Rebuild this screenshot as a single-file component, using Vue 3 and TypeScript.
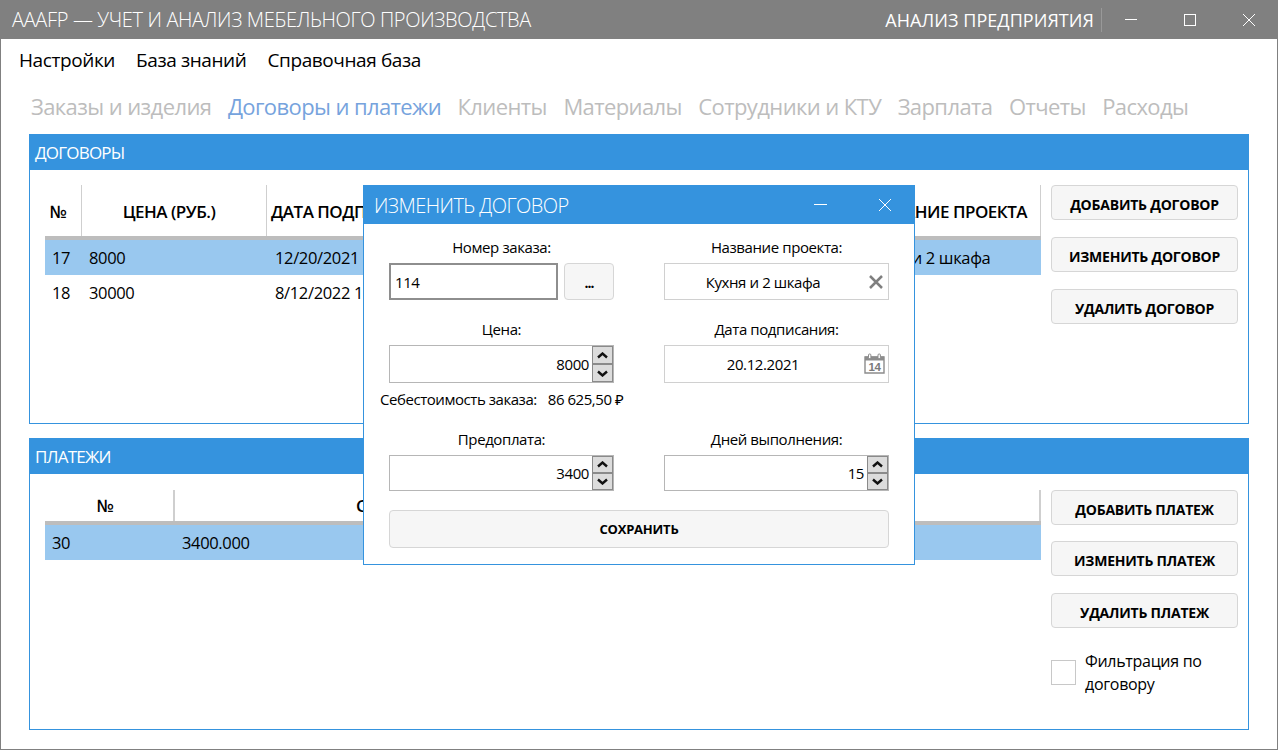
<template>
  <div class="window">
    <header class="titlebar">
      <span class="app-title">АААFP — УЧЕТ И АНАЛИЗ МЕБЕЛЬНОГО ПРОИЗВОДСТВА</span>
      <span class="app-section">АНАЛИЗ ПРЕДПРИЯТИЯ</span>
      <div class="win-controls">
        <button class="win-btn">
          <svg width="12" height="12" viewBox="0 0 12 12"><path d="M0 5.5H12" stroke="#fff" /></svg>
        </button>
        <button class="win-btn">
          <svg width="12" height="12" viewBox="0 0 12 12"><rect x="0.5" y="0.5" width="11" height="11" fill="none" stroke="#fff" /></svg>
        </button>
        <button class="win-btn">
          <svg width="12" height="12" viewBox="0 0 12 12"><path d="M0 0L12 12M12 0L0 12" stroke="#fff" /></svg>
        </button>
      </div>
    </header>

    <nav class="menu">
      <span v-for="m in menu" :key="m">{{ m }}</span>
    </nav>

    <nav class="tabs">
      <span v-for="t in tabs" :key="t" :class="{ active: t === activeTab }">{{ t }}</span>
    </nav>

    <main class="content">
      <section class="group group-contracts">
        <h2 class="group-title">ДОГОВОРЫ</h2>
        <div class="group-body">
          <div class="grid contracts">
            <div class="grid-head">
              <div class="th th-num">№</div>
              <div class="th th-price">ЦЕНА (РУБ.)</div>
              <div class="th th-left">ДАТА ПОДПИСАНИЯ</div>
              <div class="th th-right">НАЗВАНИЕ ПРОЕКТА</div>
            </div>
            <div v-for="r in contracts" :key="r.id" class="grid-row" :class="{ selected: r.selected }">
              <div class="td">{{ r.id }}</div>
              <div class="td">{{ r.price }}</div>
              <div class="td td-date">{{ r.date }}</div>
              <div class="td">{{ r.project }}</div>
            </div>
          </div>
          <div class="actions">
            <button v-for="b in contractActions" :key="b" class="btn">{{ b }}</button>
          </div>
        </div>
      </section>

      <section class="group group-payments">
        <h2 class="group-title">ПЛАТЕЖИ</h2>
        <div class="group-body">
          <div class="grid payments">
            <div class="grid-head">
              <div class="th th-id">№</div>
              <div class="th th-sum">СУММА</div>
            </div>
            <div class="grid-row selected">
              <div class="td">30</div>
              <div class="td td-sum">3400.000</div>
            </div>
          </div>
          <div class="actions">
            <button v-for="b in paymentActions" :key="b" class="btn">{{ b }}</button>
            <label class="filter">
              <span class="checkbox"></span>
              <span class="filter-text">Фильтрация по договору</span>
            </label>
          </div>
        </div>
      </section>
    </main>

    <div class="dialog">
      <header class="dialog-head">
        <span class="dialog-title">ИЗМЕНИТЬ ДОГОВОР</span>
        <div class="dialog-controls">
          <svg width="14" height="14" viewBox="0 0 14 14"><path d="M0 6.5H13" stroke="#fff" /></svg>
          <svg width="14" height="14" viewBox="0 0 14 14"><path d="M1 1L13 13M13 1L1 13" stroke="#fff" /></svg>
        </div>
      </header>
      <div class="dialog-body">
        <div class="field-row">
          <div class="field">
            <label>Номер заказа:</label>
            <div class="order-line">
              <div class="input input-strong">114</div>
              <button class="btn btn-dots">...</button>
            </div>
          </div>
          <div class="field">
            <label>Название проекта:</label>
            <div class="input input-light input-center input-text">
              Кухня и 2 шкафа
              <svg class="clear-icon" width="14" height="14" viewBox="0 0 14 14"><path d="M1 1L13 13M13 1L1 13" stroke="#7f7f7f" stroke-width="2.5" /></svg>
            </div>
          </div>
        </div>

        <div class="field-row row-price">
          <div class="field">
            <label>Цена:</label>
            <div class="input input-mid input-num">
              <span class="num-value">8000</span>
              <span class="spin">
                <span class="spin-btn"><svg width="11" height="7" viewBox="0 0 11 7"><path d="M1 5.5L5.5 1.5L10 5.5" fill="none" stroke="#111" stroke-width="2.4" /></svg></span>
                <span class="spin-btn"><svg width="11" height="7" viewBox="0 0 11 7"><path d="M1 1.5L5.5 5.5L10 1.5" fill="none" stroke="#111" stroke-width="2.4" /></svg></span>
              </span>
            </div>
          </div>
          <div class="field">
            <label>Дата подписания:</label>
            <div class="input input-light input-center input-date">
              20.12.2021
              <svg class="cal-icon" width="21" height="21" viewBox="0 0 21 21">
                <path d="M1 4H20V20H1Z" fill="#fff" stroke="#8c8c8c" stroke-width="1.4" />
                <path d="M1 3.5H20V7.5H1Z" fill="#8c8c8c" />
                <rect x="4.5" y="1" width="2.4" height="4.6" rx="1" fill="#fff" stroke="#8c8c8c" />
                <rect x="14" y="1" width="2.4" height="4.6" rx="1" fill="#fff" stroke="#8c8c8c" />
                <text x="10.5" y="18" text-anchor="middle" font-size="11.5" font-weight="600" fill="#7a7a7a">14</text>
              </svg>
            </div>
          </div>
        </div>

        <div class="cost-line">
          <span>Себестоимость заказа:</span>
          <span>86 625,50 ₽</span>
        </div>

        <div class="field-row row-prepay">
          <div class="field">
            <label>Предоплата:</label>
            <div class="input input-mid input-num">
              <span class="num-value">3400</span>
              <span class="spin">
                <span class="spin-btn"><svg width="11" height="7" viewBox="0 0 11 7"><path d="M1 5.5L5.5 1.5L10 5.5" fill="none" stroke="#111" stroke-width="2.4" /></svg></span>
                <span class="spin-btn"><svg width="11" height="7" viewBox="0 0 11 7"><path d="M1 1.5L5.5 5.5L10 1.5" fill="none" stroke="#111" stroke-width="2.4" /></svg></span>
              </span>
            </div>
          </div>
          <div class="field">
            <label>Дней выполнения:</label>
            <div class="input input-mid input-num">
              <span class="num-value">15</span>
              <span class="spin">
                <span class="spin-btn"><svg width="11" height="7" viewBox="0 0 11 7"><path d="M1 5.5L5.5 1.5L10 5.5" fill="none" stroke="#111" stroke-width="2.4" /></svg></span>
                <span class="spin-btn"><svg width="11" height="7" viewBox="0 0 11 7"><path d="M1 1.5L5.5 5.5L10 1.5" fill="none" stroke="#111" stroke-width="2.4" /></svg></span>
              </span>
            </div>
          </div>
        </div>

        <button class="btn btn-save">СОХРАНИТЬ</button>
      </div>
    </div>
  </div>
</template>

<script setup lang="ts">
interface Contract {
  id: number
  price: string
  date: string
  project: string
  selected?: boolean
}

const menu: string[] = ['Настройки', 'База знаний', 'Справочная база']
const tabs: string[] = ['Заказы и изделия', 'Договоры и платежи', 'Клиенты', 'Материалы', 'Сотрудники и КТУ', 'Зарплата', 'Отчеты', 'Расходы']
const activeTab = 'Договоры и платежи'

const contracts: Contract[] = [
  { id: 17, price: '8000', date: '12/20/2021 12:00:00 AM', project: 'Кухня и 2 шкафа', selected: true },
  { id: 18, price: '30000', date: '8/12/2022 12:00:00 AM', project: '' }
]

const contractActions: string[] = ['ДОБАВИТЬ ДОГОВОР', 'ИЗМЕНИТЬ ДОГОВОР', 'УДАЛИТЬ ДОГОВОР']
const paymentActions: string[] = ['ДОБАВИТЬ ПЛАТЕЖ', 'ИЗМЕНИТЬ ПЛАТЕЖ', 'УДАЛИТЬ ПЛАТЕЖ']
</script>

<style scoped>
.window {
  position: relative;
  width: 1278px;
  height: 750px;
  box-sizing: border-box;
  border: 1px solid #808080;
  border-top: none;
  background: #fff;
  overflow: hidden;
  font-family: "Open Sans", "Noto Sans", sans-serif;
  color: #000;
  display: flex;
  flex-direction: column;
}

.titlebar {
  height: 39px;
  margin: 0 -1px;
  padding-left: 12px;
  background: #808080;
  color: #fff;
  display: flex;
  align-items: center;
  flex-shrink: 0;
}

.app-title {
  font-size: 20px;
  font-weight: 300;
  letter-spacing: -0.35px;
  white-space: nowrap;
}

.app-section {
  margin-left: auto;
  font-size: 18px;
  letter-spacing: 0.05px;
  padding-right: 7px;
  border-right: 1px solid #999;
  line-height: 24px;
  white-space: nowrap;
}

.win-controls {
  display: flex;
  width: 176px;
  flex-shrink: 0;
}

.win-btn {
  flex: 1;
  height: 39px;
  padding: 0;
  border: none;
  background: none;
  display: flex;
  align-items: center;
  justify-content: center;
}

.menu {
  height: 42px;
  padding-left: 18px;
  display: flex;
  align-items: center;
  gap: 21px;
  font-size: 19px;
  letter-spacing: -0.4px;
  flex-shrink: 0;
}

.tabs {
  height: 49px;
  margin-bottom: 4px;
  padding-left: 30px;
  display: flex;
  align-items: center;
  gap: 16.5px;
  font-size: 22px;
  letter-spacing: -0.6px;
  color: #bdbdbd;
  white-space: nowrap;
  flex-shrink: 0;
}

.tabs .active {
  color: #76a3dd;
}

.content {
  padding: 0 28px;
  display: flex;
  flex-direction: column;
  gap: 14px;
}

.group {
  border: 1px solid #3593de;
  box-sizing: border-box;
  display: flex;
  flex-direction: column;
}

.group-contracts {
  height: 290px;
}

.group-payments {
  height: 292px;
}

.group-title {
  margin: 0;
  height: 35px;
  padding-left: 5px;
  background: #3593de;
  color: #fff;
  font-size: 17px;
  font-weight: 400;
  letter-spacing: -0.8px;
  line-height: 36px;
  flex-shrink: 0;
}

.group-body {
  display: flex;
  padding: 15px 10px 0 15px;
  gap: 10px;
}

.group-payments .group-body {
  padding-top: 16px;
}

.group-payments .btn:first-child {
  margin-bottom: -1px;
}

.grid {
  width: 996px;
  flex-shrink: 0;
  font-size: 16.5px;
  letter-spacing: -0.35px;
}

.grid-head,
.grid-row {
  display: grid;
}

.contracts .grid-head,
.contracts .grid-row {
  grid-template-columns: 37px 185px 589px 185px;
}

.payments .grid-head,
.payments .grid-row {
  grid-template-columns: 130px 866px;
}

.grid-head {
  border-bottom: 4px solid #bdbdbd;
  box-sizing: border-box;
  font-weight: 600;
  font-size: 17px;
}

.contracts .grid-head {
  height: 55px;
}

.payments .grid-head {
  height: 35px;
}

.th {
  border-right: 2px solid #cfcfcf;
  display: flex;
  align-items: center;
  justify-content: center;
  white-space: nowrap;
  letter-spacing: -0.5px;
}

.contracts .th {
  padding-top: 2px;
  border-right-width: 1px;
}

.th-num {
  padding-right: 10px;
}

.th-price {
  padding-right: 10px;
}

.th-left {
  justify-content: flex-start;
  padding-left: 4px;
  border-right: none !important;
}

.th-right {
  justify-content: flex-end;
  padding-right: 13px;
  border-right: 2px solid #cfcfcf;
}

.th-id {
  padding-right: 8px;
}

.th-sum {
  justify-content: flex-start;
  padding-left: 181px;
}

.grid-row {
  height: 35px;
  align-items: center;
}

.grid-row.selected {
  background: #99c8ef;
}

.td {
  padding-left: 7px;
  white-space: nowrap;
}

.td-date {
  padding-left: 8px;
}

.actions {
  width: 187px;
  display: flex;
  flex-direction: column;
  gap: 17px;
}

.btn {
  height: 35px;
  padding: 4px 0 0;
  box-sizing: border-box;
  border: 1.5px solid #d6d6d6;
  border-radius: 4px;
  background: #f6f6f6;
  color: #000;
  font-family: inherit;
  font-size: 14px;
  font-weight: 700;
  letter-spacing: -0.22px;
}

.filter {
  display: flex;
  gap: 9px;
  margin-top: 5px;
  font-size: 16px;
  letter-spacing: -0.3px;
  line-height: 23px;
}

.checkbox {
  width: 25px;
  height: 25px;
  margin-top: 10px;
  box-sizing: border-box;
  border: 1.5px solid #c8c8c8;
  flex-shrink: 0;
}

.filter-text {
  width: 130px;
}

.dialog {
  position: absolute;
  left: 362px;
  top: 185px;
  width: 552px;
  height: 380px;
  box-sizing: border-box;
  border: 1px solid #3593de;
  background: #fff;
}

.dialog-head {
  height: 38px;
  margin: 0 -1px;
  padding-left: 11px;
  background: #3593de;
  color: #fff;
  display: flex;
  align-items: center;
  justify-content: space-between;
}

.dialog-title {
  font-size: 20px;
  font-weight: 300;
  letter-spacing: -0.55px;
}

.dialog-controls {
  display: flex;
  gap: 50px;
  padding-right: 23px;
}

.dialog-body {
  padding: 13px 25px 0;
  font-size: 15px;
  letter-spacing: -0.4px;
}

.field-row {
  display: grid;
  grid-template-columns: 225px 225px;
  justify-content: space-between;
}

.row-price {
  margin-top: 19px;
}

.row-prepay {
  margin-top: 20px;
}

.field label {
  display: block;
  text-align: center;
  height: 21px;
  line-height: 21px;
  margin-bottom: 5px;
}

.order-line {
  display: flex;
  gap: 6px;
  height: 37px;
}

.btn-dots {
  width: 50px;
  height: 37px;
  padding-top: 2px;
  letter-spacing: -1px;
}

.input {
  height: 37px;
  box-sizing: border-box;
  display: flex;
  align-items: center;
  background: #fff;
  white-space: nowrap;
}

.input-strong {
  width: 169px;
  padding: 1px 0 0 4px;
  border: 2px solid #8e8e8e;
}

.input-light {
  border: 1.5px solid #d0d0d0;
}

.input-center {
  position: relative;
  justify-content: center;
  padding-right: 27px;
}

.input-text {
  padding-top: 1px;
}

.input-date {
  height: 38px;
}

.input-mid {
  border: 1.5px solid #b6b6b6;
}

.row-price .input-mid {
  height: 38px;
}

.row-prepay .input-mid {
  height: 36px;
}

.input-num {
  justify-content: flex-end;
}

.num-value {
  padding: 0 3px 0 0;
}

.spin {
  width: 21px;
  align-self: stretch;
  display: flex;
  flex-direction: column;
  flex-shrink: 0;
}

.spin-btn {
  flex: 1;
  display: flex;
  align-items: center;
  justify-content: center;
  background: #dcdcdc;
  border: 1px solid #8a8a8a;
}

.clear-icon {
  position: absolute;
  right: 5px;
  top: 11px;
}

.cal-icon {
  position: absolute;
  right: 3px;
  top: 7px;
  font-family: "Liberation Sans", sans-serif;
}

.cost-line {
  margin: 6px 0 0 -9px;
  height: 20px;
  line-height: 20px;
  display: flex;
  gap: 11px;
  letter-spacing: -0.45px;
}

.btn-save {
  display: block;
  width: 100%;
  height: 38px;
  margin-top: 19px;
  padding-top: 0;
  font-size: 13px;
}
</style>
